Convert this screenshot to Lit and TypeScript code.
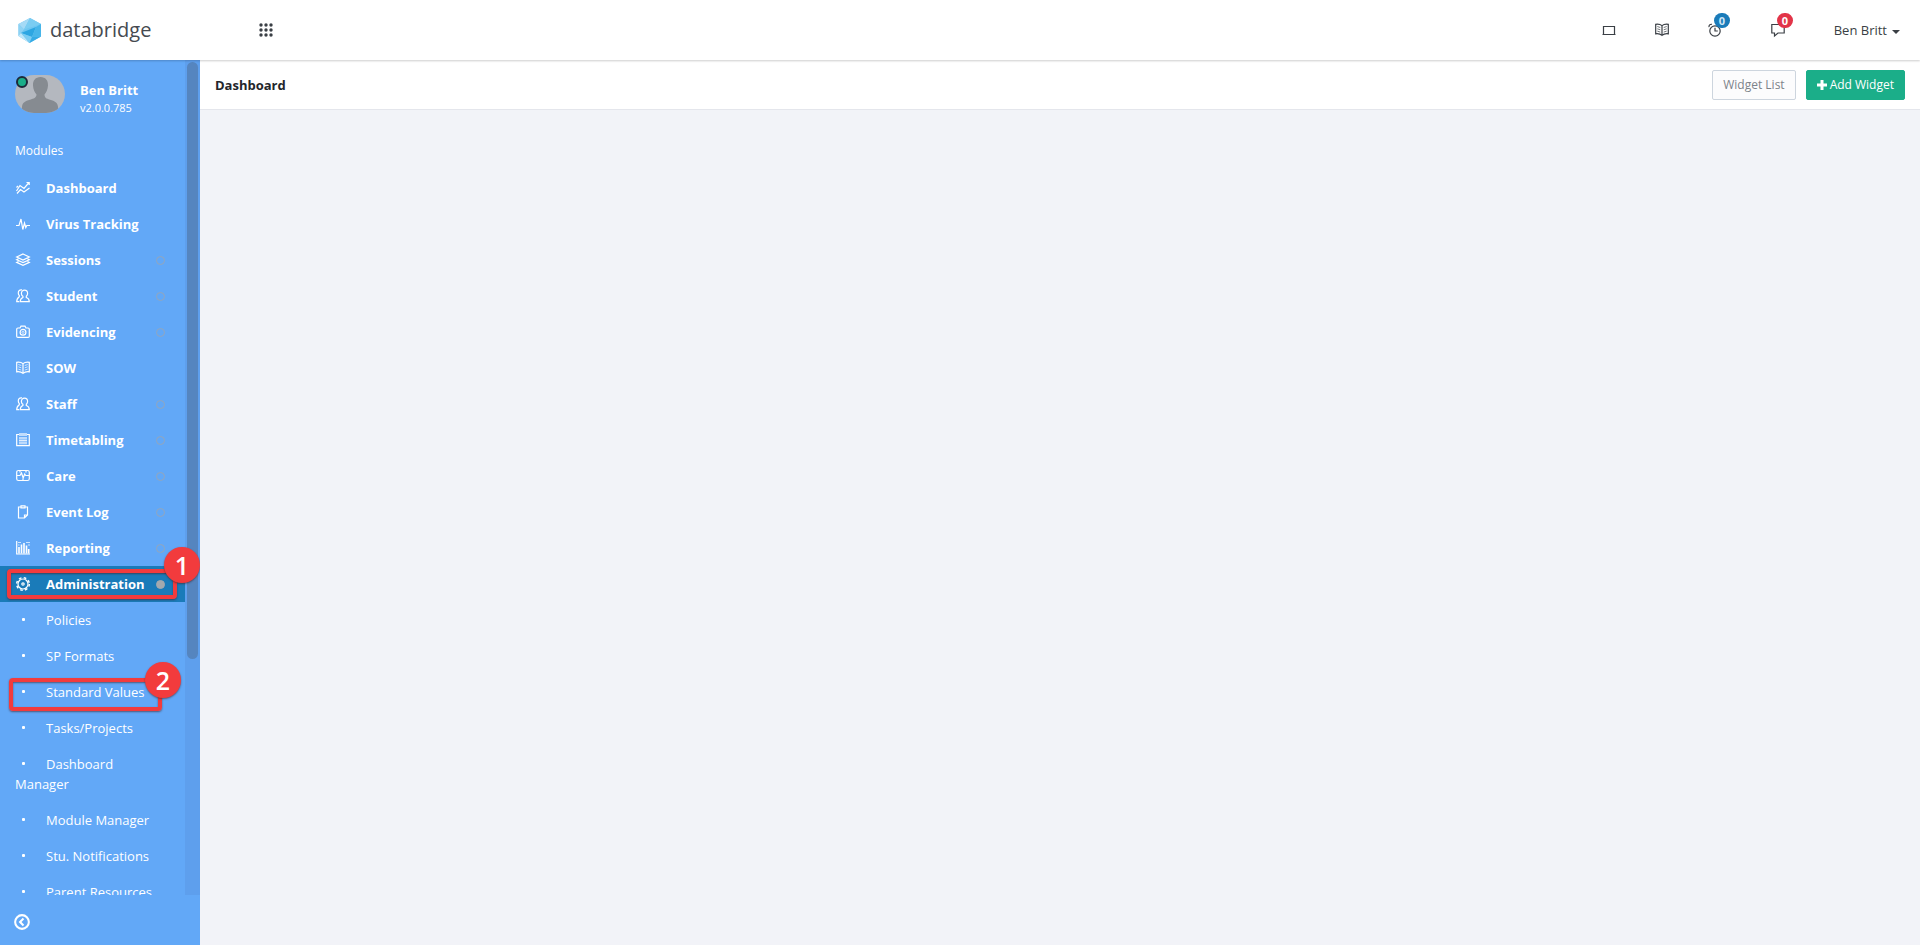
import { LitElement, html, css, svg, nothing } from "lit";
import { customElement, property, state } from "lit/decorators.js";

const glyphs: Record<string, unknown> = {
  trend: svg`<path d="M.5 10 4 4.500l4 3L13 1.500M1 12.500 4.500 8.500 8 11l5.500-4M10.500 1.500H13.200V4M.500 6.500 2 5"/>`,
  pulse: svg`<path d="M0 8.500h3L5 2l1.800 10.500L8.500 6l1.300 4.500 1-2H14"/>`,
  layers: svg`<path d="M7 1 13.300 4 7 7 .700 4ZM2.500 5.800.700 6.700 7 9.600l6.300-2.900-1.800-.9M2.500 8.500.700 9.400 7 12.300l6.300-2.900-1.800-.9"/>`,
  people: svg`<path d="M8.500 1.200c2 0 3.100 1.400 3.100 3.200 0 1.300-.6 2.300-1.300 2.900v1.200c1.700.6 3 1.500 3 4.200H4.200c0-2.700 1.200-3.600 2.700-4.200V7.300C6 6.700 5.400 5.700 5.400 4.400c0-1.800 1.100-3.200 3.100-3.200Z"/><path d="M6 .9C3.700.4 2.200 1.800 2.300 3.900c0 1.200.4 2 1 2.600v1.200C1.600 8.800.700 9.800.700 12.700h2.500"/>`,
  camera: svg`<path d="M.7 4.200c0-.8.400-1.200 1.200-1.200H4l1-1.800h4L10 3h2.100c.8 0 1.200.4 1.200 1.200v7c0 .8-.4 1.200-1.200 1.200H1.900c-.8 0-1.200-.4-1.200-1.200Z"/><circle cx="7" cy="7.300" r="2.900"/><circle class="fine" cx="7" cy="7.300" r="1.100"/>`,
  book: svg`<path d="M7 2.600C5.200 1.200 3 1 .7 1.300v9.500c2.400-.3 4.500 0 6.300 1.600 1.800-1.600 3.900-1.900 6.300-1.600V1.300C11 1 8.800 1.200 7 2.600Zm0 0v9.800"/><path class="fine" d="m2.300 3.500 3 1m-3 1.300 3 1m-3 1.300 3 1m6.400-5.600-3 1m3 1.300-3 1m3 1.300-3 1"/>`,
  calendar: svg`<path d="M3 1.500H.700v11.200h12.600V1.500H11"/><path d="M4 0v3M6 0v3M8 0v3M10 0v3"/><path class="fine" d="M3 5h8M3 7.500h8M3 10h8M4 4v7.500M6 4v7.500M8 4v7.500M10 4v7.500"/>`,
  care: svg`<rect x=".7" y="1.500" width="12.600" height="10" rx="1.800"/><path d="M.7 6.500h3.300L5.500 4 7.200 9 8.700 5l1 1.500h3.600M4 1.500v2M10 1.500v2M7 9.500v2"/>`,
  clipboard: svg`<path d="M5 2H2.500v11h6l3-3V2H9M5 .8h4v2H5Zm3.500 12V10h3"/>`,
  chart: svg`<path d="M.7 0v13H14"/><path stroke-width="1.600" d="M3 12.500V6M5.500 12.500V3.500M8 12.500V2M10.500 12.500V4.500M12.700 12.500V8"/><path class="fine" d="M2 1.500h3M10 1.500h4M12 4h2M2 4h1.500"/>`,
  gear: svg`<circle cx="7" cy="7" r="6.300" stroke-dasharray="2.600 2.350" stroke-width="1.500"/><circle cx="7" cy="7" r="5"/><circle cx="7" cy="7" r="1.200"/>`,
  screen: svg`<path d="M1.500 3.500h11v8h-11ZM.500 11.500h13"/>`,
  alarm: svg`<circle cx="7" cy="8" r="5.200"/><path d="M7 4.800V8h2.800M1 4.200C.7 2.300 2 1 4 1.300M13 4.200C13.300 2.300 12 1 10 1.300"/>`,
  chat: svg`<path d="M.8 1.500h12.400v8.500H7L3.500 13v-3H.800Z"/>`,
  back: svg`<circle cx="7" cy="7" r="6"/><path d="M8.300 4 5.300 7l3 3"/>`,
};

@customElement("db-icon")
export class DbIcon extends LitElement {
  @property() name = "";

  static styles = css`
    :host {
      display: inline-block;
      width: 14px;
      height: 14px;
    }
    svg {
      display: block;
      width: 100%;
      height: 100%;
      fill: none;
      stroke: currentColor;
      stroke-width: var(--icon-stroke, 1.2);
      overflow: visible;
    }
    .fine {
      stroke-width: 0.7;
    }
  `;

  render() {
    return html`<svg viewBox="0 0 14 14" aria-hidden="true">${glyphs[this.name]}</svg>`;
  }
}

interface Module {
  label: string;
  icon: string;
  toggle?: boolean;
  step?: number;
  children?: { label: string; step?: number }[];
}

const modules: Module[] = [
  { label: "Dashboard", icon: "trend" },
  { label: "Virus Tracking", icon: "pulse" },
  { label: "Sessions", icon: "layers", toggle: true },
  { label: "Student", icon: "people", toggle: true },
  { label: "Evidencing", icon: "camera", toggle: true },
  { label: "SOW", icon: "book" },
  { label: "Staff", icon: "people", toggle: true },
  { label: "Timetabling", icon: "calendar", toggle: true },
  { label: "Care", icon: "care", toggle: true },
  { label: "Event Log", icon: "clipboard", toggle: true },
  { label: "Reporting", icon: "chart", toggle: true },
  {
    label: "Administration",
    icon: "gear",
    toggle: true,
    step: 1,
    children: [
      { label: "Policies" },
      { label: "SP Formats" },
      { label: "Standard Values", step: 2 },
      { label: "Tasks/Projects" },
      { label: "Dashboard Manager" },
      { label: "Module Manager" },
      { label: "Stu. Notifications" },
      { label: "Parent Resources" },
    ],
  },
];

@customElement("db-sidebar")
export class DbSidebar extends LitElement {
  @state() private open = "Administration";

  static styles = css`
    :host {
      display: flex;
      flex-direction: column;
      width: 200px;
      flex: none;
      min-height: 0;
      background: #62a8f7;
      color: #fff;
      font-size: 13px;
      line-height: 20px;
    }
    .scroller {
      display: flex;
      flex: 1;
      min-height: 0;
      overflow: hidden;
    }
    .content {
      position: relative;
      z-index: 1;
      flex: 1;
      min-width: 0;
    }
    .track {
      flex: none;
      width: 11px;
      padding: 2px;
      background: #5e9fed;
    }
    .thumb {
      height: 71.8%;
      border-radius: 6px;
      background: #5585bf;
    }
    .profile {
      display: flex;
      gap: 15px;
      padding: 15px 15px 0;
    }
    .avatar {
      position: relative;
      width: 50px;
      height: 38px;
    }
    .avatar svg {
      display: block;
      border-radius: 20px;
    }
    .online {
      position: absolute;
      left: 1px;
      top: 1px;
      width: 8px;
      height: 8px;
      border: 2px solid #1d2939;
      border-radius: 50%;
      background: #1bae89;
    }
    .who {
      padding-top: 5px;
    }
    .name {
      font-weight: 700;
    }
    .version {
      font-size: 11px;
      line-height: 16px;
    }
    .heading {
      margin: 0;
      padding: 25px 15px 9px;
      font-size: 12px;
      font-weight: 400;
    }
    ul {
      margin: 0;
      padding: 0;
      list-style: none;
    }
    li {
      position: relative;
    }
    a {
      display: block;
      padding: 8px 25px 8px 15px;
      color: inherit;
      text-decoration: none;
    }
    .module {
      display: flex;
      align-items: center;
      font-weight: 700;
      padding-right: 20px;
    }
    .module.active {
      background: #1a7bb9;
    }
    .module db-icon {
      margin: 0 16px 0 1px;
      flex: none;
    }
    .dot {
      box-sizing: border-box;
      width: 9px;
      height: 9px;
      margin-left: auto;
      border: 1px solid #93a6bd;
      border-radius: 50%;
    }
    .active .dot {
      border-color: #a3a9ae;
      background: #a3a9ae;
    }
    .bullet {
      display: inline-block;
      box-sizing: border-box;
      width: 31px;
      padding-left: 7px;
      vertical-align: 4px;
    }
    .bullet::before {
      content: "";
      display: block;
      width: 3px;
      height: 3px;
      border-radius: 1px;
      background: #fff;
    }
    .mark {
      position: absolute;
      z-index: 2;
      box-sizing: border-box;
      border: 4px solid #f23b3d;
      border-radius: 4px;
      box-shadow: 0 1px 2px #44222299, inset 0 1px 2px #44222299;
      pointer-events: none;
    }
    .mark-1 {
      inset: 3px 8px 3px 7px;
    }
    .mark-2 {
      inset: 4px 23px -1px 9px;
    }
    .step {
      position: absolute;
      top: -26px;
      right: -27px;
      width: 36px;
      height: 36px;
      border-radius: 50%;
      background: #f23b3d;
      box-shadow: 0 1px 2px #44222299;
      font: 600 25px/36px "Open Sans", "Noto Sans", sans-serif;
      text-align: center;
    }
    .mark-2 .step {
      right: -23px;
      top: -20px;
    }
    .footer {
      display: flex;
      align-items: center;
      height: 50px;
      padding: 0 14px;
    }
    .collapse {
      display: flex;
      align-items: center;
      margin-top: 4px;
      padding: 0;
      border: 0;
      background: none;
      color: inherit;
      cursor: pointer;
      --icon-stroke: 1.8;
    }
    .collapse db-icon {
      width: 16px;
      height: 16px;
    }
  `;

  private mark(step?: number) {
    return step
      ? html`<span class="mark mark-${step}"><span class="step">${step}</span></span>`
      : nothing;
  }

  private pick(e: Event, label: string) {
    e.preventDefault();
    this.open = this.open === label ? "" : label;
  }

  render() {
    return html`
      <div class="scroller">
        <div class="content">
          <div class="profile">
            <div class="avatar">
              <svg width="50" height="38" viewBox="0 0 50 38" aria-hidden="true">
                <path fill="#b4b8bf" d="M0 0h50v38H0z" />
                <path fill="#868b91" d="M25.500 2c5 0 7.800 3.500 7.500 8.500-.2 3.700-1.700 7-3.500 9 .2 3.500 1.500 4 5.500 5.200 5 1.500 7.500 2.500 8 7L43.500 38h-37L7 31.700c.5-4.500 3-5.500 8-7 4-1.200 6.300-1.700 6.500-5.200-1.800-2-3.300-5.300-3.500-9C17.700 5.500 20.500 2 25.500 2Z" />
              </svg>
              <span class="online"></span>
            </div>
            <div class="who">
              <div class="name">Ben Britt</div>
              <div class="version">v2.0.0.785</div>
            </div>
          </div>
          <h2 class="heading">Modules</h2>
          <nav>
            <ul>
              ${modules.map(
                (m) => html`
                  <li>
                    <a
                      href="#"
                      class="module ${m.children && this.open === m.label ? "active" : ""}"
                      @click=${(e: Event) => this.pick(e, m.label)}
                    >
                      <db-icon name=${m.icon}></db-icon>${m.label}
                      ${m.toggle ? html`<span class="dot"></span>` : nothing}
                    </a>
                    ${this.mark(m.step)}
                  </li>
                  ${m.children && this.open === m.label
                    ? m.children.map(
                        (c) => html`<li><a href="#"><span class="bullet"></span>${c.label}</a>${this.mark(c.step)}</li>`
                      )
                    : nothing}
                `
              )}
            </ul>
          </nav>
        </div>
        <div class="track"><div class="thumb"></div></div>
      </div>
      <div class="footer">
        <button class="collapse" aria-label="Collapse menu"><db-icon name="back"></db-icon></button>
      </div>
    `;
  }
}

@customElement("app-root")
export class AppRoot extends LitElement {
  static styles = css`
    :host {
      display: flex;
      flex-direction: column;
      height: 100vh;
      background: #f2f3f8;
      color: #3a3f45;
      font: 13px/20px "Open Sans", "Noto Sans", sans-serif;
    }
    button {
      font: inherit;
      color: inherit;
      cursor: pointer;
    }
    .topbar {
      position: relative;
      z-index: 3;
      display: flex;
      align-items: center;
      height: 60px;
      padding: 0 20px 0 17px;
      background: #fff;
      box-shadow: 0 1px 2px #00000033;
    }
    .brand {
      display: flex;
      align-items: center;
      gap: 8px;
      width: 242px;
      font-size: 20px;
      line-height: 28px;
      color: #454a50;
    }
    .brand svg {
      display: block;
    }
    .icon-button {
      position: relative;
      display: flex;
      padding: 0;
      border: 0;
      background: none;
    }
    .tools {
      display: flex;
      align-items: center;
      gap: 39px;
      margin-left: auto;
    }
    .counted {
      margin-right: 10px;
    }
    .badge {
      position: absolute;
      left: 6px;
      top: -10px;
      padding: 0 5px;
      border-radius: 8px;
      background: #1a7bb9;
      color: #cfe6f5;
      font-size: 11px;
      font-weight: 700;
      line-height: 15px;
    }
    .badge.alert {
      background: #e23448;
      color: #fff;
    }
    .user {
      display: flex;
      align-items: center;
      gap: 5px;
      padding: 0;
      border: 0;
      background: none;
    }
    .caret {
      border: 4px solid transparent;
      border-top-color: currentColor;
      border-bottom: 0;
      margin-top: 3px;
    }
    .body {
      display: flex;
      flex: 1;
      min-height: 0;
    }
    main {
      flex: 1;
      min-width: 0;
    }
    .page-head {
      display: flex;
      align-items: center;
      gap: 10px;
      height: 49px;
      padding: 0 15px;
      border-bottom: 1px solid #e4e6ec;
      background: #fff;
    }
    h1 {
      margin: 0 auto 0 0;
      font-size: 13px;
      line-height: 20px;
      color: #23262b;
    }
    .btn {
      display: flex;
      align-items: center;
      gap: 3px;
      height: 30px;
      padding: 0 10px;
      border: 1px solid #cdd5de;
      border-radius: 2px;
      background: #fcfcfd;
      color: #7d838a;
      font-size: 12px;
    }
    .btn.primary {
      border-color: #1bae89;
      background: #1bae89;
      color: #fff;
    }
  `;

  render() {
    return html`
      <header class="topbar">
        <div class="brand">
          <svg width="25" height="25" viewBox="0 0 25 25" aria-hidden="true">
            <path fill="#6ec6f1" d="M13 0 24 6v12.500L12.500 25 1.500 18V6Z" />
            <path fill="#a5daf6" d="M13 0 1.500 6 7 11.500Z" />
            <path fill="#8dd2f4" d="M1.500 6v12L7 11.500Z" />
            <path fill="#7accf2" d="M13 0 24 6 7 11.500Z" />
            <path fill="#2ca6e2" d="M19 9 4 15l11 4Z" />
            <path fill="#47b5e9" d="m19 9 5-3v12.500L15 19Z" />
            <path fill="#bfe7f9" d="M1.500 18 4 15l8.500 10Z" />
            <path fill="#7accf2" d="m4 15 11 4-2.500 6Z" />
            <path fill="#35abe5" d="m15 19 9-.5L12.500 25Z" />
          </svg>
          <span>databridge</span>
        </div>
        <button class="icon-button" aria-label="Applications">
          <svg width="14" height="14" viewBox="0 0 14 14" fill="currentColor" aria-hidden="true">
            ${[2, 7, 12].map((y) => [2, 7, 12].map((x) => svg`<circle cx=${x} cy=${y} r="1.700"/>`))}
          </svg>
        </button>
        <div class="tools">
          <button class="icon-button" aria-label="Screen"><db-icon name="screen"></db-icon></button>
          <button class="icon-button" aria-label="Guide"><db-icon name="book"></db-icon></button>
          <button class="icon-button counted" aria-label="Reminders">
            <db-icon name="alarm"></db-icon><span class="badge">0</span>
          </button>
          <button class="icon-button counted" aria-label="Messages">
            <db-icon name="chat"></db-icon><span class="badge alert">0</span>
          </button>
          <button class="user">Ben Britt<span class="caret"></span></button>
        </div>
      </header>
      <div class="body">
        <db-sidebar></db-sidebar>
        <main>
          <div class="page-head">
            <h1>Dashboard</h1>
            <button class="btn">Widget List</button>
            <button class="btn primary">
              <svg width="10" height="10" viewBox="0 0 10 10" aria-hidden="true">
                <path fill="currentColor" d="M3.500 0h3v3.500H10v3H6.500V10h-3V6.500H0v-3h3.500Z" />
              </svg>
              Add Widget
            </button>
          </div>
        </main>
      </div>
    `;
  }
}
